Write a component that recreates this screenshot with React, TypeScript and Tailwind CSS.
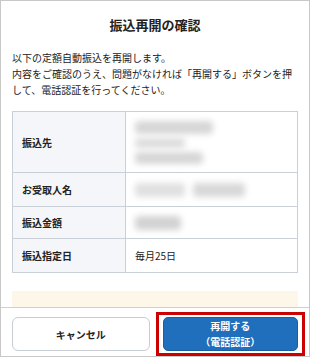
export default function App() {
  const font = { fontFamily: '"Noto Sans CJK JP", "Noto Sans", sans-serif' };

  return (
    <div
      className="w-[310px] h-[357px] bg-white border border-[#c8c8c8] flex flex-col overflow-hidden text-[#222]"
      style={font}
    >
      {/* Body */}
      <div className="flex-1 overflow-hidden px-[11px]">
        <h1 className="pt-[15px] text-center text-[13px] leading-[18px] font-bold">
          振込再開の確認
        </h1>
        <p className="mt-[16px] text-[10px] leading-[16px]">
          以下の定額自動振込を再開します。
          <br />
          内容をご確認のうえ、問題がなければ「再開する」ボタンを押して、電話認証を行ってください。
        </p>

        <table className="mt-[13px] w-full border-collapse text-[10px]">
          <tbody>
            <tr className="h-[61px]">
              <th className="w-[113px] border border-[#c9d0d8] bg-[#f4f6f9] pl-[9px] text-left font-semibold">
                振込先
              </th>
              <td className="border border-[#c9d0d8] pl-[9px]">
                <div className="flex flex-col gap-[4px]">
                  <div className="h-[13px] w-[78px] rounded bg-[#d6d6d6] blur-[3px]" />
                  <div className="h-[10px] w-[50px] rounded bg-[#dcdcdc] blur-[3px]" />
                  <div className="h-[12px] w-[68px] rounded bg-[#d6d6d6] blur-[3px]" />
                </div>
              </td>
            </tr>
            <tr className="h-[34px]">
              <th className="border border-[#c9d0d8] bg-[#f4f6f9] pl-[9px] text-left font-semibold">
                お受取人名
              </th>
              <td className="border border-[#c9d0d8] pl-[9px]">
                <div className="flex gap-[8px]">
                  <div className="h-[14px] w-[50px] rounded bg-[#e0e0e0] blur-[3px]" />
                  <div className="h-[14px] w-[52px] rounded bg-[#d8d8d8] blur-[3px]" />
                </div>
              </td>
            </tr>
            <tr className="h-[32px]">
              <th className="border border-[#c9d0d8] bg-[#f4f6f9] pl-[9px] text-left font-semibold">
                振込金額
              </th>
              <td className="border border-[#c9d0d8] pl-[9px]">
                <div className="h-[14px] w-[46px] rounded bg-[#d2d2d2] blur-[3px]" />
              </td>
            </tr>
            <tr className="h-[34px]">
              <th className="border border-[#c9d0d8] bg-[#f4f6f9] pl-[9px] text-left font-semibold">
                振込指定日
              </th>
              <td className="border border-[#c9d0d8] pl-[9px]">毎月25日</td>
            </tr>
          </tbody>
        </table>

        <div className="mt-[18px] h-[40px] bg-[#fdf7ea]" />
      </div>

      {/* Footer */}
      <div className="border-t border-[#cfcfcf] px-[11px] pt-[9px] pb-[5px] flex gap-[13px]">
        <button className="flex-1 h-[34px] rounded-[6px] border border-[#c8cdd3] bg-white text-[10px] font-bold text-[#222]">
          キャンセル
        </button>
        <div className="relative flex-1">
          <button className="w-full h-[34px] rounded-[5px] bg-[#1f6fbd] border border-[#1b5fa3] text-white text-[10px] leading-[16px] font-bold">
            再開する
            <br />
            （電話認証）
          </button>
          <div className="absolute -left-[7px] -right-[7px] -top-[5px] -bottom-[5px] border-[3px] border-[#cc0000] pointer-events-none" />
        </div>
      </div>
    </div>
  );
}
